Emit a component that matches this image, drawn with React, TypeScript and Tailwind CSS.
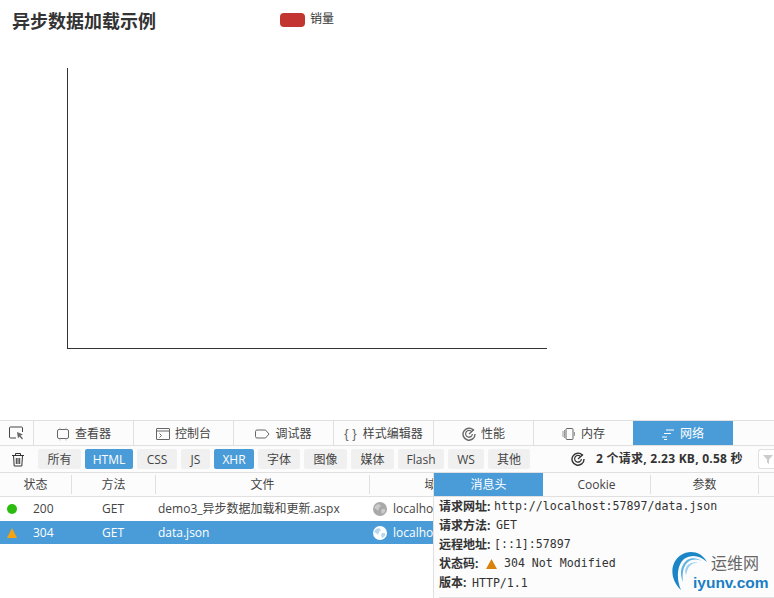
import React from "react";

const ui = "font-['Open_Sans','Noto_Sans_CJK_SC',sans-serif]";

function Globe({ light }: { light?: boolean }) {
  const c = light ? "#ffffff" : "#a9a9a9";
  const d = light ? "#4a9cd8" : "#ffffff";
  return (
    <svg width="14" height="14" viewBox="0 0 14 14" className="shrink-0">
      <circle cx="7" cy="7" r="7" fill={c} />
      <path d="M3 3l3-1 2 2-2 2-1 3-2-2-2-1zM9 7l3 0 0 3-3 2-1-3z" fill={d} opacity="0.4" />
    </svg>
  );
}

function Gauge({ size = 14, color = "#666" }: { size?: number; color?: string }) {
  return (
    <svg width={size} height={size} viewBox="0 0 14 14" fill="none" stroke={color}>
      <path d="M11.5 3.2A6 6 0 1 0 13 7" strokeWidth="1.4" />
      <path d="M9.8 4.8A3.4 3.4 0 1 0 10.4 7" strokeWidth="1.2" />
      <path d="M7 7l5-4.5" strokeWidth="1.3" />
    </svg>
  );
}

const tabs: { label: string; icon: React.ReactNode }[] = [
  {
    label: "查看器",
    icon: (
      <svg width="14" height="14" viewBox="0 0 14 14" fill="none" stroke="#666">
        <rect x="1.5" y="2.5" width="11" height="9" rx="1.5" />
        <path d="M4 .5v2M10 .5v2M4 11.5v2M10 11.5v2" stroke="#bbb" />
      </svg>
    ),
  },
  {
    label: "控制台",
    icon: (
      <svg width="14" height="14" viewBox="0 0 14 14" fill="none" stroke="#666">
        <rect x=".5" y="1.5" width="13" height="11" rx=".5" />
        <path d="M.5 4h13" />
        <path d="M3.500 6.500l2 2-2 2" />
      </svg>
    ),
  },
  {
    label: "调试器",
    icon: (
      <svg width="15" height="14" viewBox="0 0 15 14" fill="none" stroke="#666">
        <path d="M2 3h8.500l3.500 4-3.500 4H2a1.500 1.500 0 0 1-1.500-1.500v-5A1.500 1.500 0 0 1 2 3z" />
      </svg>
    ),
  },
  {
    label: "样式编辑器",
    icon: <span className="mr-[1px] font-['Liberation_Sans',sans-serif] text-[13px] font-light leading-none text-[#666]">{"{ }"}</span>,
  },
  { label: "性能", icon: <Gauge /> },
  {
    label: "内存",
    icon: (
      <svg width="14" height="14" viewBox="0 0 14 14" fill="none" stroke="#666">
        <rect x="4" y="1.500" width="7" height="11" rx="1" />
        <path d="M1 4v6M2.500 3v8M12.500 5v4" stroke="#999" />
      </svg>
    ),
  },
  {
    label: "网络",
    icon: (
      <svg width="14" height="14" viewBox="0 0 14 14" fill="none" stroke="#ffffff">
        <path d="M5 3h8M3 6.500h7M1 10h5M3 12.500h3" />
      </svg>
    ),
  },
];

const filters = [
  { t: "所有", w: "w-[43px]" },
  { t: "HTML", w: "w-[48px]", on: true },
  { t: "CSS", w: "w-[40px]" },
  { t: "JS", w: "w-[29px]" },
  { t: "XHR", w: "w-[40px]", on: true },
  { t: "字体", w: "w-[42px]" },
  { t: "图像", w: "w-[43px]" },
  { t: "媒体", w: "w-[43px]" },
  { t: "Flash", w: "w-[46px]" },
  { t: "WS", w: "w-[36px]" },
  { t: "其他", w: "w-[42px]" },
];

function DetailLine({ label, children }: { label: string; children: React.ReactNode }) {
  return (
    <div className="flex h-[19.2px] items-center whitespace-nowrap">
      <span className="text-[12px] font-bold text-[#333]">{label}</span>
      <span className="ml-[3.5px] flex items-center font-['DejaVu_Sans_Mono',monospace] text-[11.6px] text-[#333]">{children}</span>
    </div>
  );
}

export default function App() {
  return (
    <div className={`relative flex h-[598px] w-[774px] flex-col overflow-hidden bg-white ${ui}`}>
      {/* Chart page */}
      <div className="h-[420px] shrink-0 pl-[12px] pt-[9px]">
        <div className="flex h-[26px] items-start">
          <h1 className="w-[268px] text-[18px] font-bold leading-[25px] text-[#333]">异步数据加载示例</h1>
          <div className="mt-[4px] h-[14px] w-[25px] rounded-[4px] bg-[#c23531]" />
          <span className="ml-[5px] text-[12px] leading-[20px] text-[#333]">销量</span>
        </div>
        <div className="ml-[55px] mt-[33px] h-[281px] w-[480px] border-b border-l border-[#333]" />
      </div>

      {/* Tabs */}
      <div className="flex h-[26px] shrink-0 border-y border-[#e0e0e0] bg-[#fcfcfc]">
        <div className="flex w-[34px] items-center justify-center border-r border-[#e0e0e0]">
          <svg width="16" height="14" viewBox="0 0 16 14" fill="none">
            <path d="M7 12H1.500a1 1 0 0 1-1-1V2a1 1 0 0 1 1-1h11a1 1 0 0 1 1 1v4" stroke="#444" />
            <path d="M8 6l6 2.500-2.500 1 2.500 3-1 1-2.500-3-1.500 2z" fill="#666" />
          </svg>
        </div>
        {tabs.map((t) => {
          const active = t.label === "网络";
          return (
            <div
              key={t.label}
              className={`flex w-[100px] items-center justify-center gap-[5px] border-r pt-[1px] text-[12px] ${
                active ? "-ml-[1px] border-[#4a9cd8] bg-[#4a9cd8] text-white" : "border-[#e0e0e0] text-[#444]"
              }`}
            >
              {t.icon}
              <span>{t.label}</span>
            </div>
          );
        })}
      </div>

      {/* Filter bar */}
      <div className="flex h-[27px] shrink-0 items-center border-b border-[#e0e0e0] bg-[#fcfcfc]">
        <div className="flex w-[38px] justify-center">
          <svg width="14" height="15" viewBox="0 0 14 15" fill="none" stroke="#333" className="mr-[3px]">
            <path d="M1 3.500h12M4.500 3.500V1.500h5v2M2.500 3.500l.7 10.500h7.600l.7-10.500M5.300 6v6M7 6v6M8.700 6v6" />
          </svg>
        </div>
        <div className="flex gap-[4px]">
          {filters.map((f) => (
            <div
              key={f.t}
              className={`flex h-[20px] items-center justify-center rounded-[2px] pt-[1px] text-[12px] ${f.w} ${
                f.on ? "bg-[#4a9cd8] text-white" : "bg-[#f0f0f0] text-[#444]"
              }`}
            >
              {f.t}
            </div>
          ))}
        </div>
        <div className="ml-[41px]">
          <Gauge size={14} color="#333" />
        </div>
        <span className="ml-[11px] whitespace-nowrap text-[12px] font-bold tracking-[0.25px] text-[#333]">2 个请求, 2.23 KB, 0.58 秒</span>
        <div className="ml-[15px] flex h-[20px] flex-1 items-center rounded-l-[3px] border border-r-0 border-[#e0e0e0] bg-white pl-[4px]">
          <svg width="10" height="10" viewBox="0 0 10 10" fill="#ccc">
            <path d="M0 1h10L6 5.500V10L4 8.500V5.500z" />
          </svg>
        </div>
      </div>

      {/* Table + sidebar */}
      <div className="flex min-h-0 flex-1">
        <div className="w-[433px] shrink-0 overflow-hidden">
          <div className="flex h-[24px] w-[510px] items-center border-b border-[#e0e0e0] bg-[#fcfcfc] text-[12px] text-[#444]">
            <div className="w-[71px] text-center">状态</div>
            <div className="flex h-[19px] w-[84px] items-center justify-center border-l border-[#e0e0e0]">方法</div>
            <div className="flex h-[19px] w-[214px] items-center justify-center border-l border-[#e0e0e0]">文件</div>
            <div className="flex h-[19px] w-[134px] items-center justify-center border-l border-[#e0e0e0]">域名</div>
          </div>
          <div className="flex h-[24px] w-[510px] items-center text-[12px] text-[#444]">
            <div className="flex w-[71px] items-center">
              <span className="ml-[7px] h-[10px] w-[10px] rounded-full bg-[#2cbb0f]" />
              <span className="ml-[16px]">200</span>
            </div>
            <div className="w-[84px] pl-[31px]">GET</div>
            <div className="w-[214px] whitespace-nowrap pl-[3px]">demo3_异步数据加载和更新.aspx</div>
            <div className="flex items-center gap-[6px] pl-[4px]">
              <Globe />
              <span>localhost:57897</span>
            </div>
          </div>
          <div className="flex h-[23px] w-[510px] items-center bg-[#4a9cd8] pt-[1px] text-[12px] text-white">
            <div className="flex w-[71px] items-center">
              <svg width="10" height="10" viewBox="0 0 10 10" className="ml-[7px]">
                <path d="M5 0l5 10H0z" fill="#f5a30f" />
              </svg>
              <span className="ml-[16px]">304</span>
            </div>
            <div className="w-[84px] pl-[31px]">GET</div>
            <div className="w-[214px] pl-[3px]">data.json</div>
            <div className="flex items-center gap-[6px] pl-[4px]">
              <Globe light />
              <span>localhost:57897</span>
            </div>
          </div>
        </div>

        <div className="flex min-w-0 flex-1 flex-col border-l border-[#e0e0e0] bg-[#fcfcfc]">
          <div className="flex h-[24px] shrink-0 items-center border-b border-[#e0e0e0] text-[12px] text-[#444]">
            <div className="flex h-[23px] w-[109px] items-center justify-center bg-[#4a9cd8] text-white">消息头</div>
            <div className="flex h-[19px] w-[108px] items-center justify-center border-r border-[#e0e0e0]">Cookie</div>
            <div className="flex h-[19px] w-[108px] items-center justify-center border-r border-[#e0e0e0]">参数</div>
          </div>
          <div className="pl-[5px]">
            <DetailLine label="请求网址:">http://localhost:57897/data.json</DetailLine>
            <DetailLine label="请求方法:">
              <span className="ml-[2px]">GET</span>
            </DetailLine>
            <DetailLine label="远程地址:">[::1]:57897</DetailLine>
            <DetailLine label="状态码:">
              <svg width="11" height="10" viewBox="0 0 11 10" className="ml-[4px] mr-[7px]">
                <path d="M5.500 0l5.500 10H0z" fill="#d9830f" />
              </svg>
              304 Not Modified
            </DetailLine>
            <DetailLine label="版本:">
              <span className="ml-[2px]">HTTP/1.1</span>
            </DetailLine>
          </div>
          <div className="ml-[5px] mt-[4px] flex-1 rounded-tl-[3px] border-l border-t border-[#e0e0e0] bg-white" />
        </div>
      </div>

      {/* Watermark */}
      <div className="absolute left-[671px] top-[549px] h-[44px] w-[100px]">
        <svg width="42" height="42" viewBox="0 0 42 42" fill="none" className="absolute left-0 top-0">
          <path d="M10 41C-1 31-2 14 10 6 18 1 30 2 36 13 29 6 20 5 13 10 6 16 5 30 10 41z" fill="#1a86c8" />
          <path d="M12 33C8 24 10 16 16 11c5-3 11-2 15 1-5-2-10-2-14 1-5 4-6 12-5 20z" fill="#5fb2e2" />
          <path d="M15 26C13 21 15 16 20 14c3-1 5-1 7 0-3 0-5 0-7 2-3 2-4 6-5 10z" fill="#9ed0ee" />
        </svg>
        <span className="absolute left-[40px] top-[3px] whitespace-nowrap text-[16px] leading-[22px] text-[#666]">运维网</span>
        <span className="absolute left-[22px] top-[25px] whitespace-nowrap font-['Liberation_Sans',sans-serif] text-[15.500px] font-bold leading-[18px] text-[#1a7fc4]">
          iyunv.com
        </span>
      </div>
    </div>
  );
}
